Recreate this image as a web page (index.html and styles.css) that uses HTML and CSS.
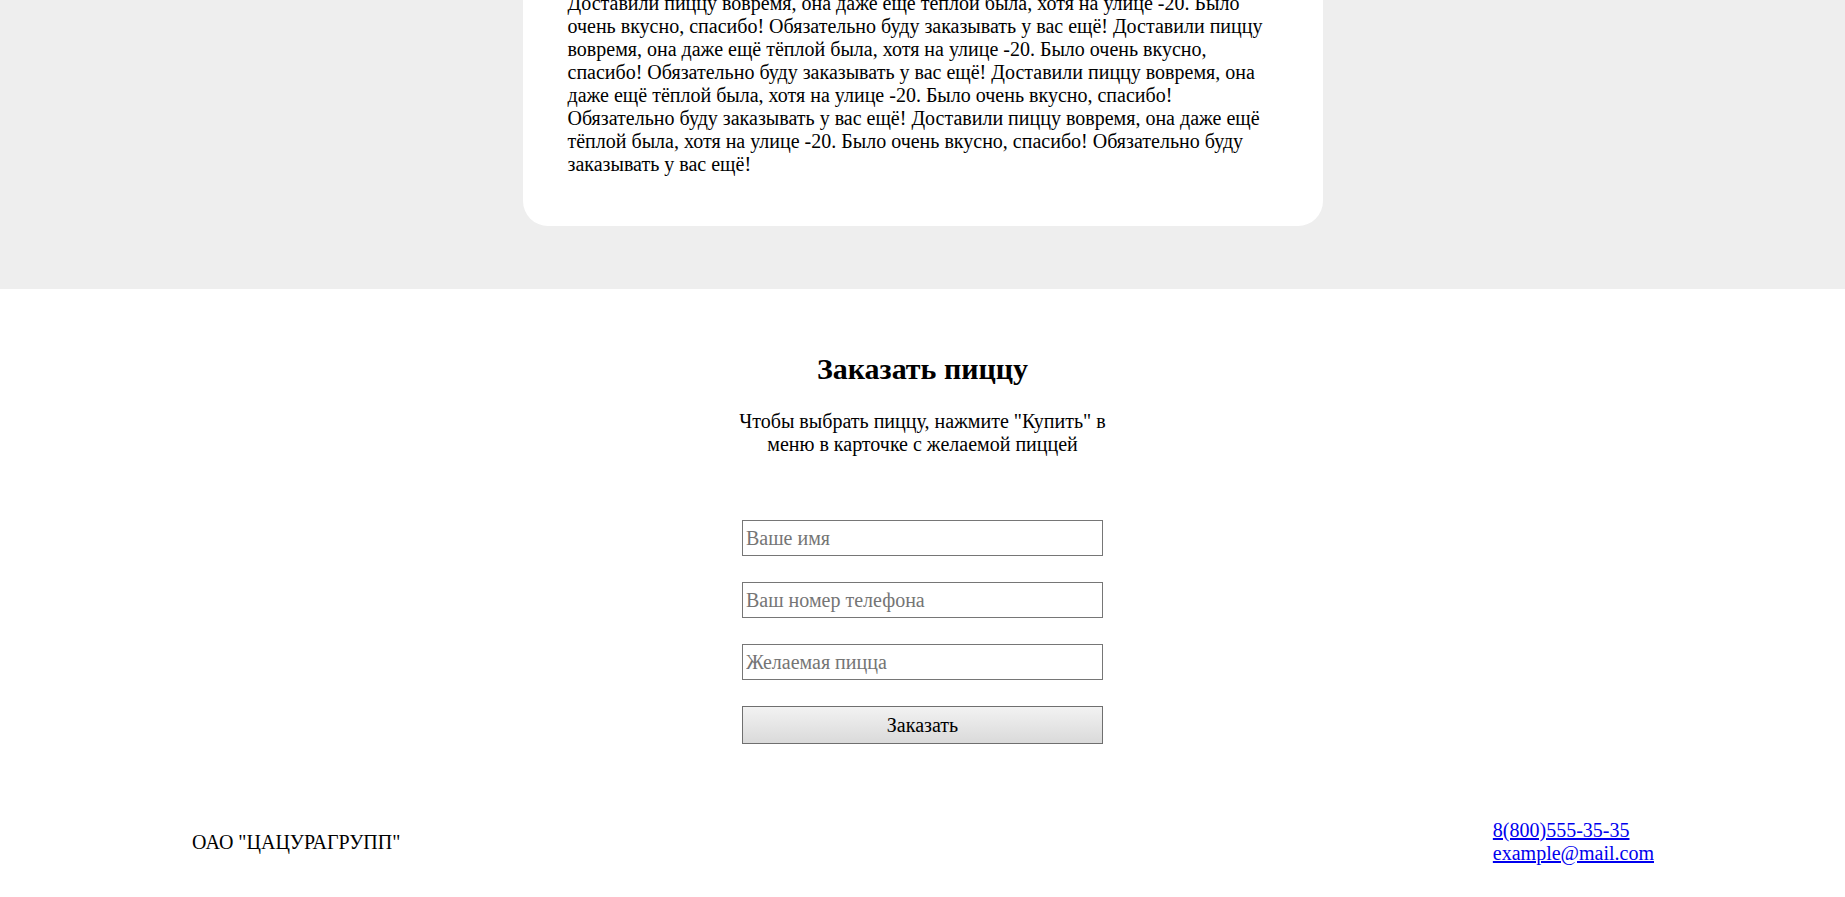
FILE: index.html
```html
<!DOCTYPE html>
<html lang="ru">
<head>
<meta charset="utf-8">
<title>Заказать пиццу</title>
<link rel="stylesheet" href="styles.css">
</head>
<body>
<section class="reviews">
  <div class="review-card">
    <p class="review-text">Доставили пиццу вовремя, она даже ещё тёплой была, хотя на улице -20. Было очень вкусно, спасибо! Обязательно буду заказывать у вас ещё! Доставили пиццу вовремя, она даже ещё тёплой была, хотя на улице -20. Было очень вкусно, спасибо! Обязательно буду заказывать у вас ещё! Доставили пиццу вовремя, она даже ещё тёплой была, хотя на улице -20. Было очень вкусно, спасибо! Обязательно буду заказывать у вас ещё! Доставили пиццу вовремя, она даже ещё тёплой была, хотя на улице -20. Было очень вкусно, спасибо! Обязательно буду заказывать у вас ещё!</p>
  </div>
</section>
<section class="order">
  <h2 class="order-title">Заказать пиццу</h2>
  <p class="order-hint">Чтобы выбрать пиццу, нажмите "Купить" в меню в карточке с желаемой пиццей</p>
  <form class="order-form">
    <input class="field" type="text" placeholder="Ваше имя">
    <input class="field" type="tel" placeholder="Ваш номер телефона">
    <input class="field" type="text" placeholder="Желаемая пицца">
    <button class="submit" type="button">Заказать</button>
  </form>
</section>
<footer class="footer">
  <div class="company">ОАО "ЦАЦУРАГРУПП"</div>
  <div class="contacts">
    <a href="#">8(800)555-35-35</a>
    <a href="#">example@mail.com</a>
  </div>
</footer>
</body>
</html>
```
FILE: styles.css
```css
html, body {
  margin: 0;
  padding: 0;
}
body {
  font-family: "Liberation Serif", "Times New Roman", serif;
  font-size: 20px;
  line-height: 23px;
  color: #000;
  background: #fff;
}
.reviews {
  background: #eeeeee;
  padding-bottom: 63px;
  overflow: hidden;
}
.review-card {
  width: 800px;
  box-sizing: border-box;
  margin: -8px auto 0;
  background: #fff;
  border-radius: 0 0 25px 25px;
  padding: 0 45px 50px;
}
.review-text {
  margin: 0;
}
.order {
  display: flex;
  flex-direction: column;
  align-items: center;
  padding-top: 63px;
}
.order-title {
  margin: 0;
  font-size: 30px;
  line-height: 34px;
  font-weight: bold;
}
.order-hint {
  margin: 24px 0 0;
  max-width: 400px;
  text-align: center;
}
.order-form {
  margin-top: 64px;
  display: flex;
  flex-direction: column;
  gap: 26px;
  width: 361px;
}
.field {
  box-sizing: border-box;
  width: 100%;
  height: 36px;
  margin: 0;
  padding: 0 3px;
  border: 1px solid #767676;
  font-family: inherit;
  font-size: 20px;
  color: #000;
  background: #fff;
  outline: none;
}
.field::placeholder {
  color: #757575;
}
.submit {
  box-sizing: border-box;
  width: 100%;
  height: 38px;
  margin: 0;
  border: 1px solid #6f6f6f;
  background: linear-gradient(#f2f2f2, #dadada);
  font-family: inherit;
  font-size: 20px;
  color: #000;
  border-radius: 0;
}
.footer {
  display: flex;
  justify-content: space-between;
  align-items: center;
  padding: 75px 191px 30px 192px;
}
.contacts {
  display: flex;
  flex-direction: column;
}
.contacts a {
  color: #0000ee;
}
```
